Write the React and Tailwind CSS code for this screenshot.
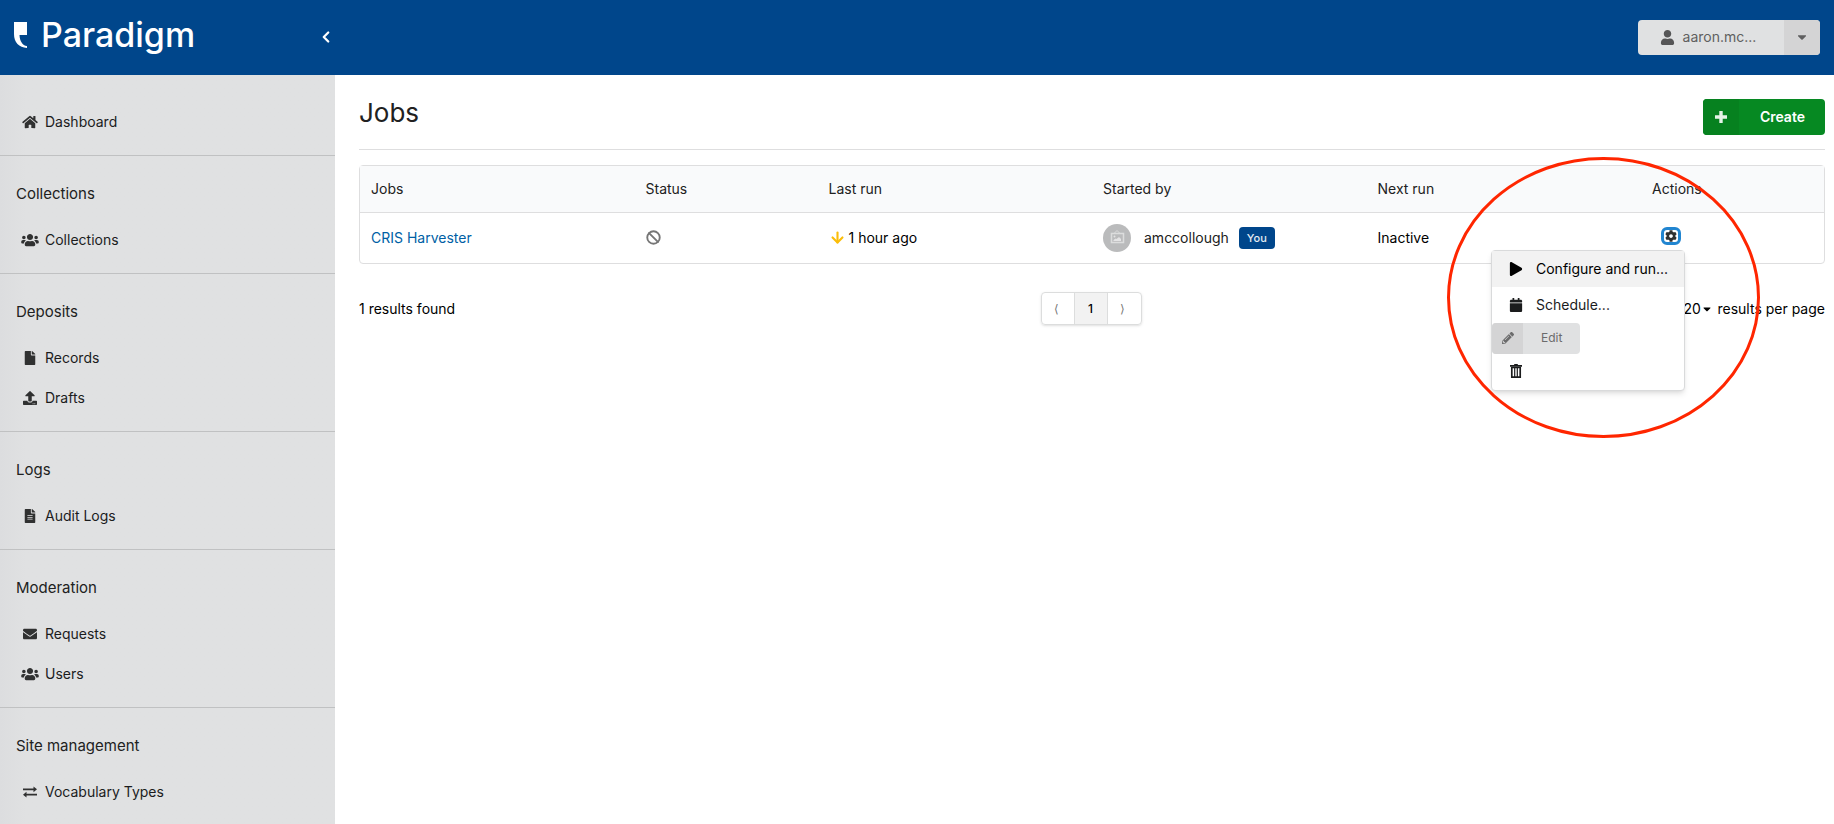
import React, { useState } from 'react';
import {
  FaCalendar, FaCaretDown, FaCog, FaEnvelope, FaFile, FaFileAlt,
  FaHome, FaPencilAlt, FaPlay, FaUpload, FaUser, FaUsers,
} from 'react-icons/fa';
import { ArrowDown, Ban, ChevronLeft } from 'lucide-react';

const NAV = [
  { items: [{ label: 'Dashboard', icon: FaHome }] },
  { title: 'Collections', items: [{ label: 'Collections', icon: FaUsers }] },
  { title: 'Deposits', items: [{ label: 'Records', icon: FaFile }, { label: 'Drafts', icon: FaUpload }] },
  { title: 'Logs', items: [{ label: 'Audit Logs', icon: FaFileAlt }] },
  { title: 'Moderation', items: [{ label: 'Requests', icon: FaEnvelope }, { label: 'Users', icon: FaUsers }] },
  { title: 'Site management', items: [{ label: 'Vocabulary Types', icon: ExchangeIcon }] },
];

const COLUMNS = [
  { label: 'Jobs', width: 'w-3/16' },
  { label: 'Status', width: 'w-2/16' },
  { label: 'Last run', width: 'w-3/16' },
  { label: 'Started by', width: 'w-3/16' },
  { label: 'Next run', width: 'w-3/16' },
  { label: 'Actions', width: 'w-2/16' },
];

export default function App() {
  return (
    <div className="flex min-h-screen flex-col bg-white font-['Inter',sans-serif] text-sm text-black">
      <Header />
      <div className="flex flex-1">
        <Sidebar />
        <Jobs />
      </div>
    </div>
  );
}

function Header() {
  return (
    <header className="flex h-[75px] items-center justify-between bg-[#00468b] pr-[14px] pb-px">
      <div className="flex w-[335px] items-center justify-between pl-[14px]">
        <a href="#home" className="flex items-center gap-[14px] pb-1 text-white">
          <svg width="13" height="26" viewBox="0 0 13 26" fill="currentColor" aria-hidden="true">
            <path d="M0 0h13v13H5.500c.2 6 3 10.500 7.500 11v2C5 25.500 0 20.500 0 12z" />
          </svg>
          <span className="text-[34px] leading-10 font-medium">Paradigm</span>
        </a>
        <button type="button" aria-label="Collapse menu" className="text-white">
          <ChevronLeft size={18} strokeWidth={3} />
        </button>
      </div>
      <div className="flex h-[35px] overflow-hidden rounded bg-[#e0e1e2] text-[#5f5f60]">
        <button type="button" className="flex w-[146px] items-center justify-center gap-2 pr-[6px]">
          <FaUser size={15} className="text-[#555556]" /> aaron.mc...
        </button>
        <button type="button" aria-label="Account menu" className="flex w-9 items-center justify-center bg-[#d4d4d5]">
          <FaCaretDown size={14} />
        </button>
      </div>
    </header>
  );
}

function Sidebar() {
  return (
    <nav className="w-[335px] shrink-0 bg-linear-to-r from-[#dcdddf] to-[#e0e1e2] to-[26px]">
      {NAV.map((section, i) => (
        <section key={i} className="border-b border-[#c0c1c2] pt-[26px] pb-[13px] first:pt-[27px] last:border-0 last:pb-0">
          {section.title && <h2 className="mb-[14px] pl-4 text-[15px] leading-6 text-[#212121]">{section.title}</h2>}
          <ul>
            {section.items.map(({ label, icon: Icon }) => (
              <li key={label}>
                <a href="#nav" className="flex h-10 items-center gap-[6px] pl-[21px] text-[#1b1c1d]">
                  <Icon className="h-[14px] w-[18px] shrink-0 text-[#303131]" />
                  {label}
                </a>
              </li>
            ))}
          </ul>
        </section>
      ))}
    </nav>
  );
}

function Jobs() {
  return (
    <main className="relative min-w-0 flex-1 pt-6 pr-[9px] pl-6">
      <div className="flex items-start justify-between border-b border-[#dededf] pb-[14px]">
        <h1 className="text-[26px] leading-7 text-[#212121]">Jobs</h1>
        <button type="button" className="flex h-9 overflow-hidden rounded bg-[#068922] text-sm font-semibold text-white">
          <span className="flex h-full w-9 items-center justify-center bg-[#06811f] text-[#e6f3e8]"><PlusIcon /></span>
          <span className="flex h-full items-center pr-5 pl-[21px]">Create</span>
        </button>
      </div>

      <div className="mt-[15px] rounded border border-[#dededf]">
        <table className="w-full table-fixed text-left">
          <thead>
            <tr className="h-[46px] border-b border-[#dededf] bg-[#f9fafb] text-[#212121]">
              {COLUMNS.map((c) => (
                <th key={c.label} className={`${c.width} px-[11px] font-normal`}>{c.label}</th>
              ))}
            </tr>
          </thead>
          <tbody>
            <tr className="h-[51px]">
              <td className="px-[11px]"><a href="#job" className="text-[#005fa5]">CRIS Harvester</a></td>
              <td className="px-[11px] text-[#767676]"><Ban size={15} strokeWidth={3} aria-label="Inactive" /></td>
              <td className="px-[11px]">
                <span className="flex items-center gap-[3px]">
                  <ArrowDown size={17} strokeWidth={3} className="text-[#fbbd08]" /> 1 hour ago
                </span>
              </td>
              <td className="px-[11px]">
                <span className="flex items-center text-[#212121]">
                  <Avatar />
                  <span className="ml-[13px]">amccollough</span>
                  <span className="ml-[10px] rounded bg-[#00468b] px-2 text-[11px] leading-[22px] font-medium text-[#e6edf4]">You</span>
                </span>
              </td>
              <td className="px-[11px]">Inactive</td>
              <td className="px-[11px] pb-1"><ActionsMenu /></td>
            </tr>
          </tbody>
        </table>
      </div>

      <div className="mt-7 grid grid-cols-3 items-center">
        <span>1 results found</span>
        <Pagination />
        <PageSize />
      </div>

      {/* highlight around the row actions */}
      <svg className="pointer-events-none absolute top-[82px] right-[74px] z-20" width="313" height="281" fill="none" aria-hidden="true">
        <ellipse cx="156.500" cy="140.500" rx="155" ry="139" stroke="#ff2600" strokeWidth="3" />
      </svg>
    </main>
  );
}

function ActionsMenu() {
  const [open, setOpen] = useState(true);

  return (
    <div className="relative ml-[9px] w-5">
      <button
        type="button"
        aria-label="Actions"
        aria-expanded={open}
        onClick={() => setOpen(!open)}
        className="flex h-[18px] w-5 items-center justify-center rounded-md border-3 border-[#2185d0] text-[#303131]"
      >
        <FaCog size={12} className="shrink-0" />
      </button>
      {open && (
        <div className="absolute top-[23px] right-[-4px] z-10 w-[194px] rounded border border-[#d9dadb] bg-white pb-px shadow-md">
          <button type="button" className="flex h-9 w-full items-center gap-3 bg-[#f2f2f2] pl-4">
            <FaPlay size={14} className="w-4" /> Configure and run...
          </button>
          <button type="button" className="flex h-9 w-full items-center gap-3 pl-4 text-[#1b1c1d]">
            <FaCalendar size={14} className="w-4" /> Schedule...
          </button>
          <button type="button" disabled className="flex h-[31px] overflow-hidden rounded bg-[#e0e1e2] text-xs text-[#6b6b6c]">
            <span className="flex h-full w-[31px] items-center justify-center bg-[#d4d4d5]"><FaPencilAlt size={12} /></span>
            <span className="flex h-full items-center px-[18px]">Edit</span>
          </button>
          <button type="button" aria-label="Delete" className="flex h-[35px] w-full items-center pl-4 text-[#1b1c1d]">
            <TrashIcon />
          </button>
        </div>
      )}
    </div>
  );
}

function Pagination() {
  return (
    <nav aria-label="Pagination" className="flex h-[33px] w-[101px] justify-self-center overflow-hidden rounded border border-[#dcdddd] text-xs shadow-sm">
      <button type="button" aria-label="Previous page" className="w-8 pr-1 text-[#767676]">⟨</button>
      <button type="button" aria-current="page" className="w-[34px] border-x border-[#dcdddd] bg-[#f2f2f2] pr-[2px] font-medium">1</button>
      <button type="button" aria-label="Next page" className="flex-1 pr-1 text-[#767676]">⟩</button>
    </nav>
  );
}

function PageSize() {
  return (
    <label className="flex items-center justify-self-end">
      <select defaultValue="20" className="w-[18px] appearance-none">
        <option>10</option>
        <option>20</option>
        <option>50</option>
      </select>
      <FaCaretDown size={12} className="mr-1" />
      results per page
    </label>
  );
}

function Avatar() {
  return (
    <svg width="28" height="28" viewBox="0 0 28 28" fill="none" aria-hidden="true">
      <circle cx="14" cy="14" r="14" fill="#babbbc" />
      <path d="M11.500 9 14 6.500 16.500 9" stroke="#dcdddd" />
      <rect x="8.500" y="9.500" width="12" height="9" stroke="#dcdddd" strokeWidth="1.500" />
      <circle cx="11.500" cy="12.500" r="1" fill="#e4e4e5" />
      <path d="M10.500 17v-1l2-1.500 1 .500 2.500-2 2 2V17z" fill="#e4e4e5" />
    </svg>
  );
}

function PlusIcon() {
  return (
    <svg width="12" height="12" viewBox="0 0 12 12" fill="currentColor" aria-hidden="true">
      <path d="M4.300 0h3.400v4.300H12v3.400H7.700V12H4.300V7.700H0V4.300h4.300z" />
    </svg>
  );
}

function TrashIcon() {
  return (
    <svg width="16" height="14" viewBox="0 0 16 14" fill="none" stroke="currentColor" aria-hidden="true">
      <path d="M2 1.900h12M6.200.6h3.600" strokeWidth="1.600" />
      <path d="M3.800 3.500h8.400v9.600H3.800z" strokeWidth="1.700" />
      <path d="M6.700 4v9M9.300 4v9" strokeWidth="1.200" />
    </svg>
  );
}

function ExchangeIcon({ className }) {
  return (
    <svg className={className} viewBox="0 0 14 14" fill="currentColor" aria-hidden="true">
      <path d="M0 3.400h10.500V1.500L14 4.300l-3.500 2.900V5.200H0zM14 10.600H3.500v1.900L0 9.700l3.500-2.900v2H14z" />
    </svg>
  );
}
